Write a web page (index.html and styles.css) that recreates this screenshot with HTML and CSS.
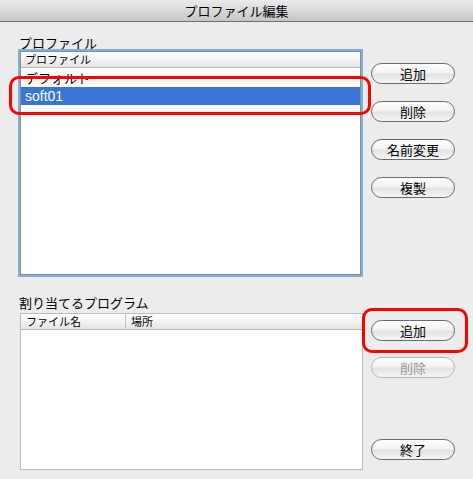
FILE: index.html
```html
<!DOCTYPE html>
<html lang="ja">
<head>
<meta charset="utf-8">
<title>プロファイル編集</title>
<link rel="stylesheet" href="styles.css">
</head>
<body>
<div class="window">
  <div class="titlebar">プロファイル編集</div>
  <div class="section top">
    <div class="left">
      <div class="label">プロファイル</div>
      <div class="list focused">
        <div class="list-head"><span class="col c-profile">プロファイル</span></div>
        <div class="row">デフォルト</div>
        <div class="row selected">soft01</div>
      </div>
    </div>
    <div class="buttons">
      <button class="btn">追加</button>
      <button class="btn">削除</button>
      <button class="btn">名前変更</button>
      <button class="btn">複製</button>
    </div>
  </div>
  <div class="section bottom">
    <div class="left">
      <div class="label">割り当てるプログラム</div>
      <div class="table">
        <div class="list-head">
          <span class="col c-file">ファイル名</span>
          <span class="col c-place">場所</span>
        </div>
      </div>
    </div>
    <div class="buttons stretch">
      <button class="btn">追加</button>
      <button class="btn" disabled>削除</button>
      <button class="btn end">終了</button>
    </div>
  </div>
  <div class="mark mark-1"></div>
  <div class="mark mark-2"></div>
</div>
</body>
</html>
```
FILE: styles.css
```css
html, body {
  margin: 0;
  padding: 0;
  background: #ececec;
}
body {
  font-family: "Noto Sans CJK JP", "Liberation Sans", sans-serif;
  font-size: 13px;
  color: #000;
}
.window {
  position: relative;
  width: 473px;
  height: 479px;
  overflow: hidden;
}
.titlebar {
  height: 21px;
  border-bottom: 1px solid #6e6e6e;
  background: linear-gradient(#ebebeb, #d9d9d9 50%, #c6c6c6);
  display: flex;
  align-items: center;
  justify-content: center;
  font-size: 13px;
  line-height: 21px;
}
.section {
  display: flex;
  align-items: flex-start;
  padding-left: 18px;
  gap: 8px;
}
.section.top {
  padding-top: 14px;
}
.section.bottom {
  padding-top: 18px;
  align-items: stretch;
}
.left {
  width: 345px;
  display: flex;
  flex-direction: column;
}
.label {
  line-height: 13px;
  height: 13px;
  padding-left: 1px;
  white-space: nowrap;
}
.bottom .label {
  line-height: 15px;
  height: 15px;
  margin-bottom: 3px;
}
.list {
  margin: 2px 2px;
  height: 224px;
  background: #fff;
  border: 1px solid #8c8c8c;
  box-shadow: 0 0 0 2px #7fb0e4;
  box-sizing: border-box;
  overflow: hidden;
}
.list-head {
  height: 15px;
  border-bottom: 1px solid #bdbdbd;
  background: linear-gradient(#ffffff, #f4f4f4 50%, #e4e4e4);
  display: flex;
  font-size: 11px;
  line-height: 15px;
  box-sizing: content-box;
}
.col {
  padding-left: 4px;
  white-space: nowrap;
}
.c-profile { padding-left: 4px; }
.row {
  height: 19px;
  line-height: 19px;
  padding-left: 4px;
  font-size: 13px;
}
.row.selected {
  background: #3a76d6;
  color: #fff;
  font-family: "Liberation Sans", "Noto Sans CJK JP", sans-serif;
  font-size: 14px;
  height: 18px;
  line-height: 18px;
}
.table {
  margin-left: 2px;
  width: 343px;
  height: 157px;
  background: #fff;
  border: 1px solid #bcbcbc;
  box-sizing: border-box;
}
.c-file {
  width: 99px;
  padding-left: 5px;
  border-right: 1px solid #c4c4c4;
}
.c-place {
  padding-left: 5px;
}
.buttons {
  display: flex;
  flex-direction: column;
  gap: 17px;
  width: 84px;
  padding-top: 27px;
}
.buttons.stretch {
  padding-top: 25px;
  padding-bottom: 10px;
  gap: 16px;
}
.btn {
  height: 21px;
  width: 84px;
  padding: 0;
  border: 1px solid #6a6a6a;
  border-radius: 11px;
  background: linear-gradient(#ffffff, #f3f3f3 45%, #e3e3e3 55%, #f6f6f6);
  font-family: "Noto Sans CJK JP", "Liberation Sans", sans-serif;
  font-size: 13px;
  line-height: 19px;
  color: #000;
  box-sizing: border-box;
}
.btn:disabled {
  color: #9a9a9a;
  border-color: #b4b4b4;
}
.btn.end {
  margin-top: auto;
}
.mark {
  position: absolute;
  border: 3px solid #f00;
  border-radius: 10px;
  box-sizing: border-box;
}
.mark-1 {
  left: 9px;
  top: 76px;
  width: 362px;
  height: 39px;
}
.mark-2 {
  left: 362px;
  top: 308px;
  width: 106px;
  height: 45px;
}
```
